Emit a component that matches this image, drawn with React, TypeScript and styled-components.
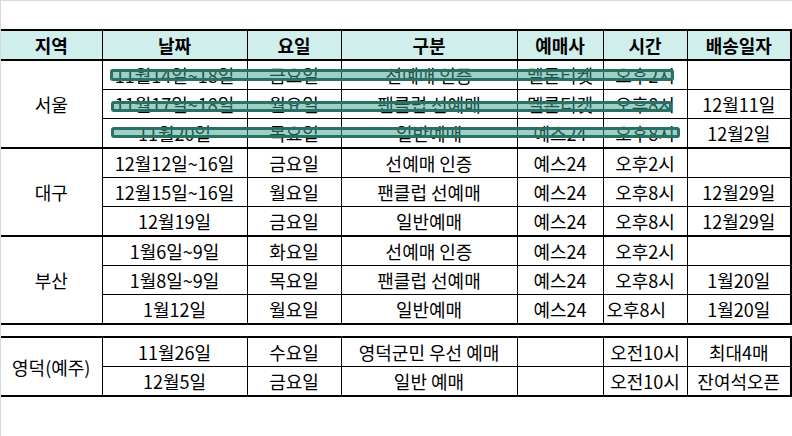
import React from 'react';
import styled, { createGlobalStyle } from 'styled-components';

const Global = createGlobalStyle`
  html, body { margin: 0; padding: 0; background: #fff; }
  body { font-family: "Noto Sans CJK KR", "Noto Sans", sans-serif; color: #000; }
`;

const Page = styled.div`
  width: 792px;
  height: 436px;
  box-sizing: border-box;
  border-top: 1px solid #d9d9d9;
  border-left: 1px solid #d9d9d9;
  padding-top: 28px;
  display: flex;
  flex-direction: column;
  gap: 11px;
  overflow: hidden;
  background: #fff;
`;

const TableWrap = styled.div`
  position: relative;
  width: 790px;
`;

const Table = styled.table`
  border-collapse: collapse;
  table-layout: fixed;
  width: 790px;
  border-top: 2px solid #000;
  border-right: 2px solid #000;
  border-bottom: 2px solid #000;
`;

const Group = styled.tbody`
  border-top: 2px solid #000;
`;

const Head = styled.th`
  background: #d0eeec;
  font-weight: 700;
  font-size: 18px;
  height: 28px;
  padding: 0;
  line-height: 1;
  border: 1px solid #000;
  border-top: 2px solid #000;
  text-align: center;
  vertical-align: middle;
  white-space: nowrap;
  &:first-child { border-left: none; }
`;

const Cell = styled.td<{ $align?: 'left' | 'center' }>`
  font-size: 18px;
  height: 28px;
  padding: 0;
  padding-left: ${p => (p.$align === 'left' ? '3px' : '0')};
  line-height: 1;
  border: 1px solid #000;
  text-align: ${p => p.$align ?? 'center'};
  vertical-align: middle;
  white-space: nowrap;
  overflow: hidden;
`;

const Region = styled(Cell)`
  border-left: none;
`;

const Strike = styled.span<{ $x: number; $y: number; $w: number; $h: number }>`
  position: absolute;
  left: ${p => p.$x}px;
  top: ${p => p.$y}px;
  width: ${p => p.$w}px;
  height: ${p => p.$h}px;
  box-sizing: border-box;
  border: 3px solid #2a7064;
  border-radius: 3px;
  background: rgba(59, 163, 141, 0.5);
  pointer-events: none;
`;

type Row = { date: string; day: string; kind: string; seller: string; time: string; ship: string; timeLeft?: boolean };
type G = { region: string; rows: Row[] };

const r = (date: string, day: string, kind: string, seller: string, time: string, ship: string, timeLeft = false): Row =>
  ({ date, day, kind, seller, time, ship, timeLeft });

const groups: G[] = [
  {
    region: '서울',
    rows: [
      r('11월14일~18일', '금요일', '선예매 인증', '멜론티켓', '오후2시', ''),
      r('11월17일~18일', '월요일', '팬클럽 선예매', '멜론티켓', '오후8시', '12월11일'),
      r('11월20일', '목요일', '일반예매', '예스24', '오후8시', '12월2일'),
    ],
  },
  {
    region: '대구',
    rows: [
      r('12월12일~16일', '금요일', '선예매 인증', '예스24', '오후2시', ''),
      r('12월15일~16일', '월요일', '팬클럽 선예매', '예스24', '오후8시', '12월29일'),
      r('12월19일', '금요일', '일반예매', '예스24', '오후8시', '12월29일'),
    ],
  },
  {
    region: '부산',
    rows: [
      r('1월6일~9일', '화요일', '선예매 인증', '예스24', '오후2시', ''),
      r('1월8일~9일', '목요일', '팬클럽 선예매', '예스24', '오후8시', '1월20일'),
      r('1월12일', '월요일', '일반예매', '예스24', '오후8시', '1월20일', true),
    ],
  },
];

const extra: G = {
  region: '영덕(예주)',
  rows: [
    r('11월26일', '수요일', '영덕군민 우선 예매', '', '오전10시', '최대4매'),
    r('12월5일', '금요일', '일반 예매', '', '오전10시', '잔여석오픈'),
  ],
};

const strikes = [
  { x: 109, y: 40, w: 564, h: 12 },
  { x: 110, y: 72, w: 561, h: 11 },
  { x: 110, y: 98, w: 569, h: 11 },
];

const widths = [101, 145, 94, 176, 86, 84, 104];

const Cols = () => (
  <colgroup>
    {widths.map((w, i) => (
      <col key={i} style={{ width: w }} />
    ))}
  </colgroup>
);

const GroupRows = ({ g }: { g: G }) => (
  <Group>
    {g.rows.map((row, i) => (
      <tr key={i}>
        {i === 0 && <Region rowSpan={g.rows.length}>{g.region}</Region>}
        <Cell>{row.date}</Cell>
        <Cell>{row.day}</Cell>
        <Cell>{row.kind}</Cell>
        <Cell>{row.seller}</Cell>
        <Cell $align={row.timeLeft ? 'left' : 'center'}>{row.time}</Cell>
        <Cell>{row.ship}</Cell>
      </tr>
    ))}
  </Group>
);

const headers = ['지역', '날짜', '요일', '구분', '예매사', '시간', '배송일자'];

export default function App() {
  return (
    <>
      <Global />
      <Page>
        <TableWrap>
          <Table>
            <Cols />
            <thead>
              <tr>
                {headers.map(h => (
                  <Head key={h}>{h}</Head>
                ))}
              </tr>
            </thead>
            {groups.map(g => (
              <GroupRows key={g.region} g={g} />
            ))}
          </Table>
          {strikes.map((s, i) => (
            <Strike key={i} $x={s.x} $y={s.y} $w={s.w} $h={s.h} />
          ))}
        </TableWrap>
        <TableWrap>
          <Table>
            <Cols />
            <GroupRows g={extra} />
          </Table>
        </TableWrap>
      </Page>
    </>
  );
}
